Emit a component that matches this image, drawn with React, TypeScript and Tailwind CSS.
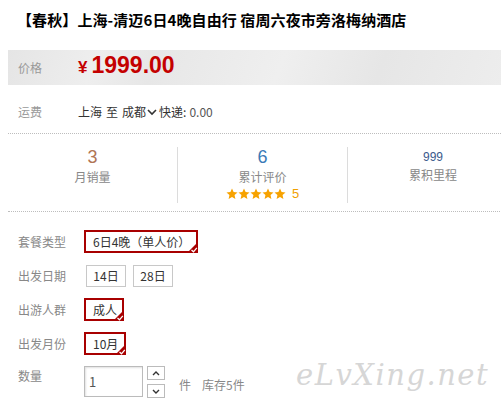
import React from "react";

const CJK = '"Noto Sans CJK SC", "Liberation Sans", sans-serif';

function Check() {
  return (
    <svg
      className="absolute right-[-2px] bottom-[-2px]"
      width="11"
      height="11"
      viewBox="0 0 11 11"
    >
      <polygon points="11,0 11,11 0,11" fill="#a80000" />
      <polyline points="4.5,8 6.5,9.8 9.8,5.8" fill="none" stroke="#fff" strokeWidth="1.3" />
    </svg>
  );
}

function Selected({ children, w }: { children: React.ReactNode; w: string }) {
  return (
    <div
      className={`relative h-[23px] ${w} border-2 border-[#a80000] flex items-center pl-[7px] text-[12px] text-[#333] leading-none`}
    >
      {children}
      <Check />
    </div>
  );
}

function Plain({ children }: { children: React.ReactNode }) {
  return (
    <div className="h-[22px] w-[40px] border border-[#c8c8c8] flex items-center justify-center text-[12px] text-[#333] leading-none">
      {children}
    </div>
  );
}

function Star() {
  return (
    <svg width="12" height="12" viewBox="0 0 24 24">
      <polygon
        points="12,1 15.2,8.2 23,9 17.1,14.2 18.8,22 12,18 5.2,22 6.9,14.2 1,9 8.8,8.2"
        fill="#f7a200"
      />
    </svg>
  );
}

export default function App() {
  return (
    <div
      className="relative w-[501px] h-[403px] overflow-hidden bg-white"
      style={{ fontFamily: CJK }}
    >
      {/* Title */}
      <div className="pt-[10px] pl-[17px] h-[50px]">
        <div className="text-[15px] leading-[20px] font-bold text-black whitespace-nowrap tracking-[0.1px]">
          【春秋】上海-清迈6日4晚自由行 宿周六夜市旁洛梅纳酒店
        </div>
      </div>

      {/* Price bar */}
      <div className="ml-[8px] h-[35px] flex items-center bg-[linear-gradient(110deg,#e5e5e5_0%,#eeeeee_18%,#e7e7e7_30%,#efefef_55%,#e6e6e6_75%,#ededed_100%)]">
        <div className="w-[70px] pl-[10px] text-[12px] text-[#999]">价格</div>
        <div className="flex items-baseline text-[#c40000] font-bold" style={{ fontFamily: '"Liberation Sans", sans-serif' }}>
          <span className="text-[17px] mr-[4px]">¥</span>
          <span className="text-[23px] leading-none">1999.00</span>
        </div>
      </div>

      {/* Shipping */}
      <div className="ml-[8px] h-[49px] pt-[19px] flex items-start border-b border-dotted border-[#bdbdbd]">
        <div className="w-[70px] pl-[10px] text-[12px] leading-[16px] text-[#999]">运费</div>
        <div className="flex items-center text-[12px] leading-[16px] text-[#333]">
          <span>上海</span>
          <span className="ml-[4px]">至</span>
          <span className="ml-[4px]">成都</span>
          <svg width="10" height="7" viewBox="0 0 10 7" className="ml-[1px] mr-[2px]">
            <polyline points="1,1 5,5 9,1" fill="none" stroke="#333" strokeWidth="1.6" />
          </svg>
          <span>快递: </span>
          <span className="ml-[3px] text-[#555]">0.00</span>
        </div>
      </div>

      {/* Stats */}
      <div className="ml-[8px] w-[510px] h-[78px] flex pt-[13px] border-b border-dotted border-[#bdbdbd]">
        <div className="w-[170px] h-[56px] flex flex-col items-center border-r border-[#dcdcdc]">
          <div className="text-[18px] leading-[20px] text-[#b07555]" style={{ fontFamily: '"Liberation Sans", sans-serif' }}>3</div>
          <div className="text-[12px] leading-[20px] text-[#888]">月销量</div>
        </div>
        <div className="w-[170px] h-[56px] flex flex-col items-center border-r border-[#dcdcdc]">
          <div className="text-[18px] leading-[20px] text-[#3a7bb7]" style={{ fontFamily: '"Liberation Sans", sans-serif' }}>6</div>
          <div className="text-[12px] leading-[20px] text-[#888]">累计评价</div>
          <div className="flex items-center h-[14px]">
            <Star />
            <Star />
            <Star />
            <Star />
            <Star />
            <span className="ml-[6px] text-[13px] text-[#f0a000]" style={{ fontFamily: '"Liberation Sans", sans-serif' }}>5</span>
          </div>
        </div>
        <div className="w-[170px] h-[56px] flex flex-col items-center">
          <div className="text-[12px] leading-[20px] text-[#3b5a8c]" style={{ fontFamily: '"Liberation Sans", sans-serif' }}>999</div>
          <div className="text-[12px] leading-[16px] text-[#888]">累积里程</div>
        </div>
      </div>

      {/* Options */}
      <div className="ml-[8px] pt-[18px] flex flex-col gap-[11px]">
        <div className="flex items-center h-[23px]">
          <div className="w-[76px] pl-[10px] text-[12px] text-[#888]">套餐类型</div>
          <Selected w="w-[114px]">6日4晚（单人价）</Selected>
        </div>
        <div className="flex items-center h-[23px]">
          <div className="w-[76px] pl-[10px] text-[12px] text-[#888]">出发日期</div>
          <div className="flex gap-[7px] ml-[2px]">
            <Plain>14日</Plain>
            <Plain>28日</Plain>
          </div>
        </div>
        <div className="flex items-center h-[23px]">
          <div className="w-[76px] pl-[10px] text-[12px] text-[#888]">出游人群</div>
          <Selected w="w-[40px]">成人</Selected>
        </div>
        <div className="flex items-center h-[23px]">
          <div className="w-[76px] pl-[10px] text-[12px] text-[#888]">出发月份</div>
          <Selected w="w-[42px]">10月</Selected>
        </div>
        <div className="flex items-start">
          <div className="w-[76px] pl-[10px] text-[12px] leading-[20px] text-[#888]">数量</div>
          <div className="w-[59px] h-[31px] border border-[#bbb] flex items-center pl-[4px] text-[13px] text-[#555] shadow-[inset_1px_1px_2px_rgba(0,0,0,0.12)]">
            1
          </div>
          <div className="ml-[4px] flex flex-col gap-[4px]">
            <div className="w-[18px] h-[14px] border border-[#bbb] flex items-center justify-center bg-white">
              <svg width="8" height="5" viewBox="0 0 8 5">
                <polyline points="1,4 4,1 7,4" fill="none" stroke="#333" strokeWidth="1.4" />
              </svg>
            </div>
            <div className="w-[18px] h-[14px] border border-[#bbb] flex items-center justify-center bg-white">
              <svg width="8" height="5" viewBox="0 0 8 5">
                <polyline points="1,1 4,4 7,1" fill="none" stroke="#333" strokeWidth="1.4" />
              </svg>
            </div>
          </div>
          <div className="ml-[14px] mt-[10px] text-[12px] text-[#888]">件</div>
          <div className="ml-[11px] mt-[10px] text-[12px] text-[#888]">库存5件</div>
        </div>
      </div>

      {/* Watermark */}
      <div
        className="absolute left-[296px] top-[354px] text-[29px] italic text-[#d6d6d6] tracking-[1.5px]"
        style={{ fontFamily: '"DejaVu Serif", serif' }}
      >
        eLvXing.net
      </div>
    </div>
  );
}
